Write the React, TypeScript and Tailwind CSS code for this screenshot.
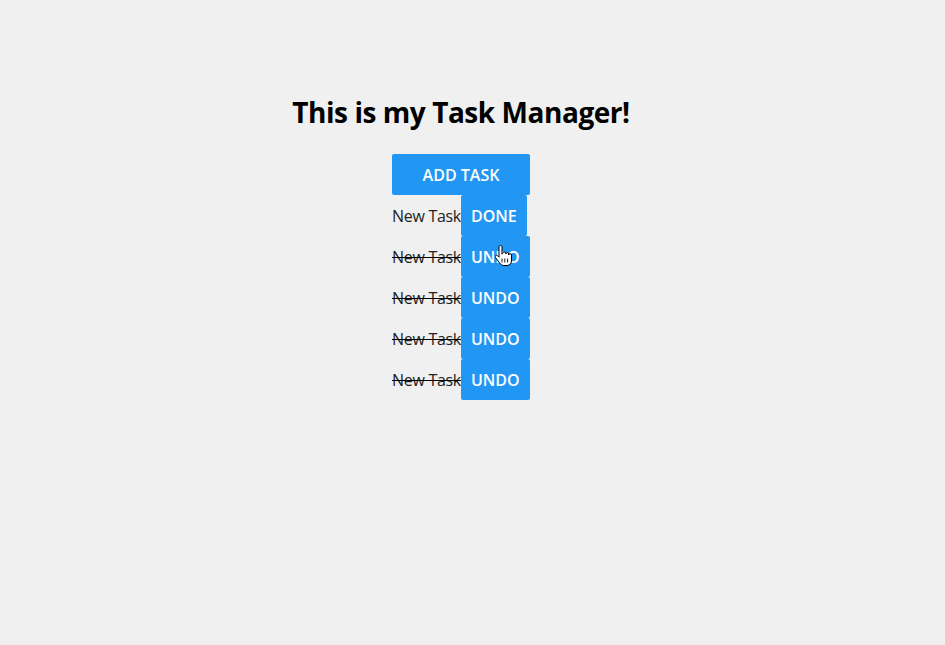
import { useState } from 'react';

type Task = { id: number; name: string; done: boolean };

const initialTasks: Task[] = [
  { id: 1, name: 'New Task', done: false },
  { id: 2, name: 'New Task', done: true },
  { id: 3, name: 'New Task', done: true },
  { id: 4, name: 'New Task', done: true },
  { id: 5, name: 'New Task', done: true },
];

function HandCursor() {
  return (
    <svg
      width="18"
      height="24"
      viewBox="0 0 18 24"
      className="pointer-events-none absolute left-[103px] top-[8px]"
    >
      <path
        d="M5.5 1.5c-.9 0-1.5.7-1.5 1.5v10.2l-1.3-1.4c-.7-.7-1.7-.7-2.2 0-.5.5-.4 1.3.1 1.9l4.3 5.6c.9 1.2 2.3 2.2 4 2.2h3.1c2.6 0 4.5-2 4.5-4.5v-6c0-.8-.6-1.4-1.4-1.4s-1.4.6-1.4 1.4v-1c0-.8-.6-1.4-1.4-1.4s-1.4.6-1.4 1.4v-.6c0-.8-.6-1.4-1.4-1.4S7 9.4 7 10.2V3c0-.8-.6-1.5-1.5-1.5z"
        fill="#fff"
        stroke="#000"
        strokeWidth="1"
      />
      <path d="M9.8 14.5v4M12.6 14.5v4M7 14.5v4" stroke="#000" strokeWidth="0.9" />
    </svg>
  );
}

export default function App() {
  const [tasks, setTasks] = useState<Task[]>(initialTasks);

  const addTask = () =>
    setTasks((t) => [...t, { id: Date.now(), name: 'New Task', done: false }]);

  const toggle = (id: number) =>
    setTasks((t) => t.map((task) => (task.id === id ? { ...task, done: !task.done } : task)));

  return (
    <div
      className="min-h-[645px] bg-[#f0f0f0] pr-[23px] pt-[94px] text-[#222]"
      style={{ fontFamily: '"Open Sans", "Noto Sans", sans-serif' }}
    >
      <div className="flex flex-col items-center">
        <h1 className="text-[28px] font-bold leading-[36px] tracking-[-0.45px] text-black">
          This is my Task Manager!
        </h1>
        <div className="mt-[24px] flex w-[138px] flex-col items-start">
          <button
            onClick={addTask}
            className="h-[41px] w-[138px] rounded-[2px] bg-[#2196f3] text-[16px] font-semibold text-white"
          >
            ADD TASK
          </button>
          {tasks.map((task, i) => (
            <div key={task.id} className="relative flex h-[41px] items-center">
              <span
                className={
                  task.done
                    ? 'text-[16px] tracking-[-0.3px] line-through decoration-black'
                    : 'text-[16px] tracking-[-0.3px]'
                }
              >
                {task.name}
              </span>
              <button
                onClick={() => toggle(task.id)}
                className="h-[41px] rounded-[2px] bg-[#2196f3] px-[10px] text-[16px] font-semibold text-white"
              >
                {task.done ? 'UNDO' : 'DONE'}
              </button>
              {i === 1 && <HandCursor />}
            </div>
          ))}
        </div>
      </div>
    </div>
  );
}
